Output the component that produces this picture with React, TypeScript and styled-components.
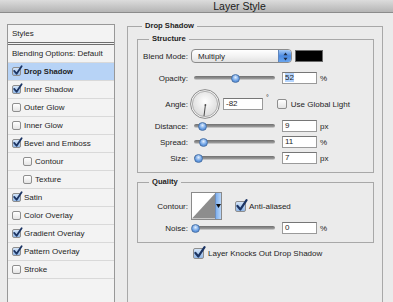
import styled, { createGlobalStyle } from 'styled-components'

const GlobalStyle = createGlobalStyle`
  html, body {
    margin: 0;
    padding: 0;
    background: #ebebeb;
  }
  body {
    font-family: "Liberation Sans", Arial, sans-serif;
    font-size: 8px;
    color: #1e1e1e;
  }
  *, *::before, *::after {
    box-sizing: border-box;
  }
`

const Window = styled.div`
  width: 393px;
  height: 302px;
  overflow: hidden;
  display: flex;
  flex-direction: column;
  background: #ebebeb;
`

const TitleBar = styled.div`
  flex: none;
  height: 13px;
  display: flex;
  align-items: center;
  justify-content: center;
  padding-left: 86px;
  background: linear-gradient(#dcdcdc, #b5b5b5);
  border-bottom: 1px solid #8c8c8c;
  font-size: 10.5px;
  line-height: 12px;
  color: #1a1a1a;
`

const Body = styled.div`
  flex: 1;
  display: flex;
  align-items: flex-start;
  gap: 12px;
  padding: 0 10px 0 7px;
`

const Sidebar = styled.div`
  flex: none;
  width: 108px;
  height: 300px;
  margin-top: 11px;
  border: 1px solid #989898;
  background: #f3f3f3;
`

const SidebarHeader = styled.div`
  height: 20px;
  padding-left: 4px;
  line-height: 17px;
  border-bottom: 3px double #6e6e6e;
`

const StyleRow = styled.div<{ $indent: number; $selected?: boolean }>`
  display: flex;
  align-items: center;
  gap: 3px;
  height: 18px;
  padding-left: ${({ $indent }) => $indent}px;
  border-bottom: 1px solid #d9d9d9;
  background: ${({ $selected }) => ($selected ? '#b7d3f6' : 'transparent')};
  font-weight: ${({ $selected }) => ($selected ? 'bold' : 'normal')};
  font-size: ${({ $selected }) => ($selected ? '7.6px' : '8px')};
`

const Main = styled.div`
  flex: 1;
  margin-top: 8px;
`

const Group = styled.fieldset`
  margin: 0;
  padding: 0 8px 0 9px;
  min-width: 0;
  min-height: 320px;
  border: 1px solid #a8a8a8;
`

const Section = styled.fieldset<{ $mt: number }>`
  margin: ${({ $mt }) => $mt}px 0 0;
  padding: 4px 0 6px;
  min-width: 0;
  border: 1px solid #a8a8a8;
`

const Legend = styled.legend<{ $indent: number }>`
  margin-left: ${({ $indent }) => $indent}px;
  padding: 0 3px;
  font-weight: bold;
  font-size: 7.6px;
  line-height: 10px;
`

const Row = styled.div<{ $h: number; $mt?: number; $pl?: number }>`
  display: flex;
  align-items: center;
  height: ${({ $h }) => $h}px;
  margin-top: ${({ $mt }) => $mt ?? 0}px;
  padding-left: ${({ $pl }) => $pl ?? 0}px;
`

const Label = styled.span`
  flex: none;
  width: 50px;
  text-align: right;
`

const Text = styled.span<{ $ml?: number }>`
  flex: none;
  margin-left: ${({ $ml }) => $ml ?? 0}px;
  white-space: nowrap;
`

const Degree = styled.span`
  flex: none;
  margin-left: 3px;
  align-self: flex-start;
  margin-top: 4px;
  font-size: 7px;
`

const Select = styled.div`
  flex: none;
  display: flex;
  align-items: center;
  width: 101px;
  height: 14px;
  margin-left: 3px;
  padding-left: 6px;
  border: 1px solid #8c8c8c;
  border-radius: 4px;
  background: linear-gradient(#ffffff, #f3f3f3 50%, #e2e2e2);
  overflow: hidden;
`

const Stepper = styled.span`
  display: flex;
  align-items: center;
  justify-content: center;
  margin-left: auto;
  width: 13px;
  height: 100%;
  border-left: 1px solid #5f86bd;
  background: linear-gradient(#a8cbf5, #4b8ae2 50%, #6aa5ee);
`

const Swatch = styled.span`
  flex: none;
  width: 28px;
  height: 12px;
  margin-left: 3px;
  background: #000;
  border: 1px solid #6a6a6a;
`

const Slider = styled.div`
  position: relative;
  flex: none;
  width: 81px;
  height: 10px;
  margin-left: 6px;

  &::before {
    content: '';
    position: absolute;
    left: 0;
    right: 0;
    top: 3px;
    height: 4px;
    border-radius: 2px;
    background: linear-gradient(#6f6f6f, #9c9c9c);
    border-bottom: 1px solid #c4c4c4;
  }
`

const Thumb = styled.span<{ $x: number }>`
  position: absolute;
  top: 0.5px;
  left: ${({ $x }) => $x - 4.5}px;
  width: 9px;
  height: 9px;
  border-radius: 50%;
  border: 1px solid #4a73a8;
  background: radial-gradient(circle at 50% 35%, #e2eefc, #6ea3e6 55%, #3d74c4);
`

const Field = styled.div<{ $w: number; $ml: number }>`
  flex: none;
  width: ${({ $w }) => $w}px;
  height: 12px;
  margin-left: ${({ $ml }) => $ml}px;
  padding-left: 2px;
  border: 1px solid #9a9a9a;
  border-top-color: #767676;
  background: #fff;
  line-height: 10px;
`

const Selected = styled.span`
  background: #b4d4fd;
`

const Dial = styled.svg`
  flex: none;
  margin-left: 2px;
`

const ContourPicker = styled.div`
  flex: none;
  display: flex;
  width: 31px;
  height: 28px;
  margin-left: 3px;
  border: 1px solid #8a8a8a;
  background: #fff;
`

const ContourArrow = styled.span`
  display: flex;
  align-items: center;
  justify-content: center;
  width: 6px;
  border-left: 1px solid #6d8fbf;
  background: linear-gradient(90deg, #7fb0ee, #b9d6f8);
`

const Box = styled.span<{ $checked?: boolean; $size: number; $ml?: number }>`
  position: relative;
  flex: none;
  width: ${({ $size }) => $size}px;
  height: ${({ $size }) => $size}px;
  margin-left: ${({ $ml }) => $ml ?? 0}px;
  border: 1px solid #8e8e8e;
  border-radius: 2px;
  background: ${({ $checked }) =>
    $checked ? 'linear-gradient(#d3e4f8, #93b9e8)' : 'linear-gradient(#ffffff, #e4e4e4)'};

  svg {
    position: absolute;
    left: 0;
    top: -2px;
    overflow: visible;
  }
`

function Check({ checked, size = 9, ml }: { checked?: boolean; size?: number; ml?: number }) {
  return (
    <Box $checked={checked} $size={size} $ml={ml}>
      {checked && (
        <svg width={size} height={size} viewBox="0 0 10 10">
          <path d="M1.3 5.4 L4 8.6 L9.6 0.2" fill="none" stroke="#1b3463" strokeWidth="2" strokeLinecap="round" strokeLinejoin="round" />
        </svg>
      )}
    </Box>
  )
}

const styleItems = [
  { name: 'Drop Shadow', checked: true, selected: true },
  { name: 'Inner Shadow', checked: true },
  { name: 'Outer Glow' },
  { name: 'Inner Glow' },
  { name: 'Bevel and Emboss', checked: true },
  { name: 'Contour', indent: true },
  { name: 'Texture', indent: true },
  { name: 'Satin', checked: true },
  { name: 'Color Overlay' },
  { name: 'Gradient Overlay', checked: true },
  { name: 'Pattern Overlay', checked: true },
  { name: 'Stroke' },
]

function SliderRow({ label, x, value, unit }: { label: string; x: number; value: string; unit: string }) {
  return (
    <Row $h={16}>
      <Label>{label}</Label>
      <Slider>
        <Thumb $x={x} />
      </Slider>
      <Field $w={35} $ml={7}>{value}</Field>
      <Text $ml={3}>{unit}</Text>
    </Row>
  )
}

export default function App() {
  return (
    <Window>
      <GlobalStyle />
      <TitleBar>Layer Style</TitleBar>
      <Body>
        <Sidebar>
          <SidebarHeader>Styles</SidebarHeader>
          <StyleRow $indent={4}>Blending Options: Default</StyleRow>
          {styleItems.map((item) => (
            <StyleRow key={item.name} $indent={item.indent ? 15 : 4} $selected={item.selected}>
              <Check checked={item.checked} />
              {item.name}
            </StyleRow>
          ))}
        </Sidebar>

        <Main>
          <Group>
            <Legend $indent={5}>Drop Shadow</Legend>

            <Section $mt={3}>
              <Legend $indent={11}>Structure</Legend>
              <Row $h={16}>
                <Label>Blend Mode:</Label>
                <Select>
                  Multiply
                  <Stepper>
                    <svg width="5" height="9" viewBox="0 0 5 9">
                      <path d="M2.5 0.5 L4.5 3.2 L0.5 3.2 Z M2.5 8.5 L4.5 5.8 L0.5 5.8 Z" fill="#1d2b44" />
                    </svg>
                  </Stepper>
                </Select>
                <Swatch />
              </Row>
              <Row $h={16} $mt={6}>
                <Label>Opacity:</Label>
                <Slider>
                  <Thumb $x={41.5} />
                </Slider>
                <Field $w={35} $ml={7}>
                  <Selected>52</Selected>
                </Field>
                <Text $ml={3}>%</Text>
              </Row>
              <Row $h={28} $mt={4}>
                <Label>Angle:</Label>
                <Dial width="30" height="30" viewBox="0 0 30 30">
                  <defs>
                    <radialGradient id="dialFill" cx="50%" cy="40%" r="60%">
                      <stop offset="0%" stopColor="#ffffff" />
                      <stop offset="100%" stopColor="#dadada" />
                    </radialGradient>
                  </defs>
                  <circle cx="15" cy="15" r="14.4" fill="#f4f4f4" stroke="#8a8a8a" strokeWidth="1" />
                  <circle cx="15" cy="15" r="12.6" fill="url(#dialFill)" stroke="#a0a0a0" strokeWidth="0.8" />
                  <line x1="15.4" y1="16" x2="14" y2="27" stroke="#4a4a4a" strokeWidth="1" />
                  <circle cx="15.4" cy="16" r="0.9" fill="#4a4a4a" />
                </Dial>
                <Field $w={40} $ml={3}>-82</Field>
                <Degree>°</Degree>
                <Check size={10} ml={8} />
                <Text $ml={4}>Use Global Light</Text>
              </Row>
              <SliderRow label="Distance:" x={8} value="9" unit="px" />
              <SliderRow label="Spread:" x={9.5} value="11" unit="%" />
              <SliderRow label="Size:" x={4.5} value="7" unit="px" />
            </Section>

            <Section $mt={4}>
              <Legend $indent={11}>Quality</Legend>
              <Row $h={28} $mt={1}>
                <Label>Contour:</Label>
                <ContourPicker>
                  <svg width="24" height="26" viewBox="0 0 24 26">
                    <polygon points="0,26 24,0 24,26" fill="#8d8d8d" />
                  </svg>
                  <ContourArrow>
                    <svg width="5" height="4" viewBox="0 0 5 4">
                      <path d="M0 0 L5 0 L2.5 4 Z" fill="#111" />
                    </svg>
                  </ContourArrow>
                </ContourPicker>
                <Check checked size={11} ml={13} />
                <Text $ml={3}>Anti-aliased</Text>
              </Row>
              <SliderRow label="Noise:" x={1} value="0" unit="%" />
            </Section>

            <Row $h={16} $mt={2} $pl={56}>
              <Check checked size={11} />
              <Text $ml={4}>Layer Knocks Out Drop Shadow</Text>
            </Row>
          </Group>
        </Main>
      </Body>
    </Window>
  )
}
